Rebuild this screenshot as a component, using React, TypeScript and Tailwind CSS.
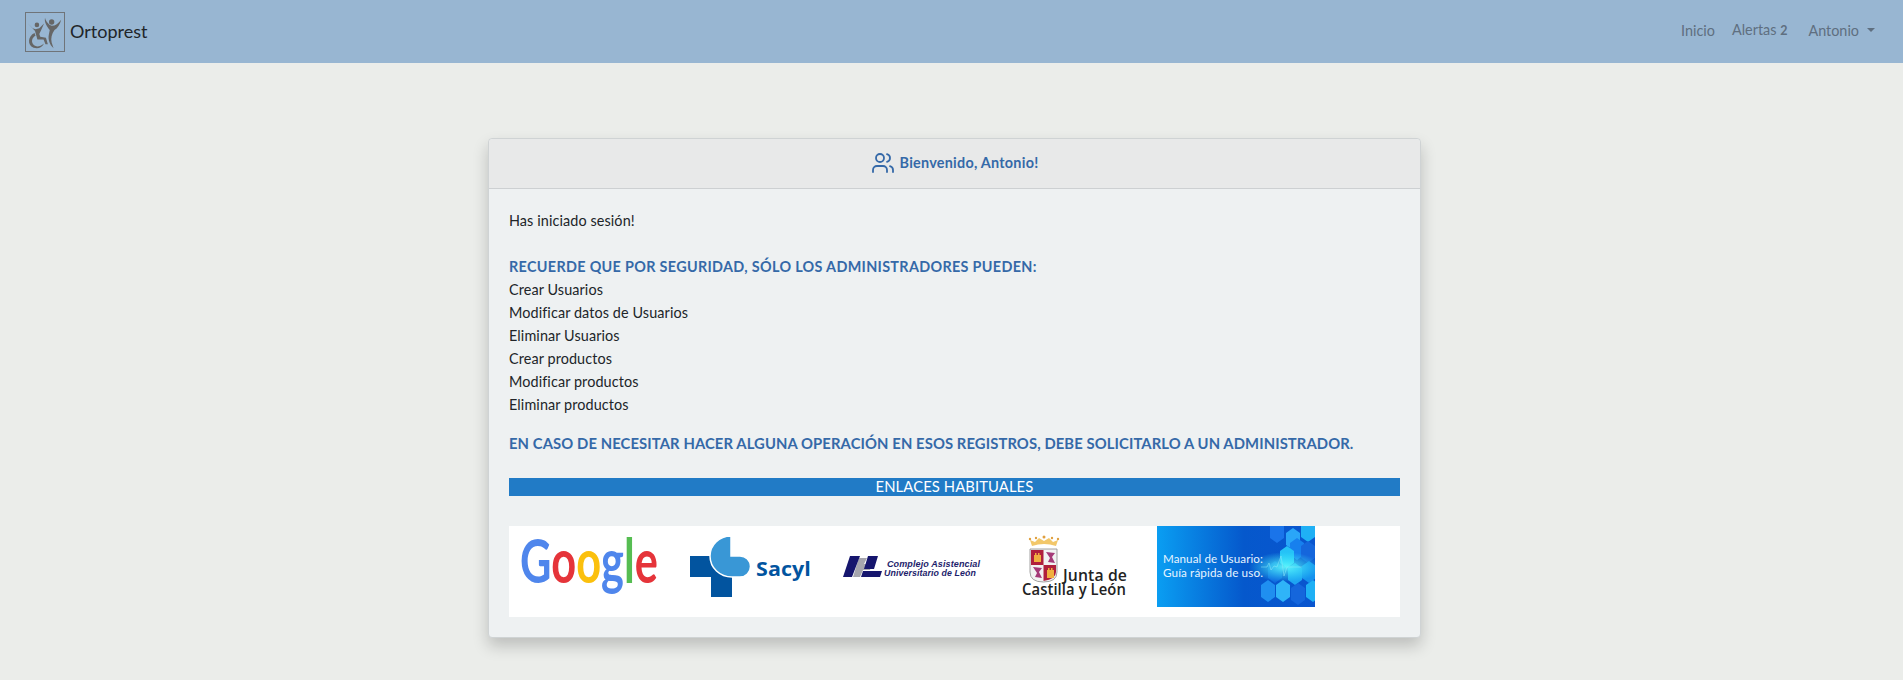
import { Users } from 'lucide-react'

const permisos = [
  'Crear Usuarios',
  'Modificar datos de Usuarios',
  'Eliminar Usuarios',
  'Crear productos',
  'Modificar productos',
  'Eliminar productos',
]

function BrandLogo() {
  return (
    <svg width="40" height="40" viewBox="0 0 40 40" className="block border border-[#6f7479] box-border">
      <g fill="#666666" stroke="none">
        <circle cx="11.5" cy="12.5" r="2.4" />
        <circle cx="27" cy="9.5" r="2.8" />
        <path d="M2 11 L7 16 L10 17 L14 16 L19 11 L16 18 L14 22 L15 25 L21 26 L23 33 L20.5 33 L18.5 28 L12 28 L9.5 19 Z" />
        <path d="M9 21 C2 24 1 34 8 36.5 C13 38 17 36 19 32 C15 35.5 11 36 8.5 34 C5 31 6 26 10 24 Z" />
        <path d="M20 5 C21 9 24 12.5 27 13.5 C31 13.5 34 11 37 7 C36 12 33 16 30 18 C27 22 26 27 27 31 L29 37 C25 34 23 28 24 23 L25 18 C22 14 19 10 20 5 Z" />
      </g>
    </svg>
  )
}

function GoogleLogo() {
  return (
    <svg width="162" height="81" className="block">
      <text x="11" y="57" fontFamily="Lato, sans-serif" fontWeight="700" fontSize="61" textLength="138" lengthAdjust="spacingAndGlyphs">
        <tspan fill="#4f86ec">G</tspan>
        <tspan fill="#e5343a">o</tspan>
        <tspan fill="#fbc00d">o</tspan>
        <tspan fill="#4f86ec">g</tspan>
        <tspan fill="#56bd52">l</tspan>
        <tspan fill="#e5343a">e</tspan>
      </text>
    </svg>
  )
}

function SacylLogo() {
  return (
    <svg width="162" height="81" className="block">
      <path d="M19 30 H61 V71 H40 V51 H19 Z" fill="#02549f" />
      <path d="M60 10 V30 H69 A10.5 10.5 0 0 1 69 51 H61 C49 51 39 42 39 30 C39 19 48 10 60 10 Z" fill="#3997d6" stroke="#ffffff" strokeWidth="1.5" />
      <text x="85" y="50" fontFamily="'Open Sans', sans-serif" fontWeight="700" fontSize="20" fill="#02549f" textLength="55" lengthAdjust="spacingAndGlyphs">Sacyl</text>
    </svg>
  )
}

function ComplejoLogo() {
  return (
    <svg width="162" height="81" className="block">
      <path d="M26 32 H34 L31 38 H39 L37 44 H30 L27 51 H20 L24 38 Z" fill="#a6a6ae" />
      <path d="M17 30 H27 L19 51 H10 Z M35 30 H45 L41 43 H31 Z M30 45 H49 L47 51 H28 Z" fill="#16166e" />
      <text fontFamily="'Liberation Sans', sans-serif" fontWeight="700" fontStyle="italic" fontSize="9.5" fill="#1d1d6b">
        <tspan x="54" y="41" textLength="93" lengthAdjust="spacingAndGlyphs">Complejo Asistencial</tspan>
        <tspan x="51" y="50" textLength="92" lengthAdjust="spacingAndGlyphs">Universitario de León</tspan>
      </text>
    </svg>
  )
}

function JuntaLogo() {
  return (
    <svg width="162" height="81" className="block">
      <path d="M37 20 L35 14 L40 16 L44 12 L49 15 L54 12 L58 16 L63 14 L61 20 Q49 16 37 20 Z" fill="#f2c76a" />
      <g fill="#e0a040">
        <circle cx="35" cy="13" r="1.2" />
        <circle cx="41" cy="12" r="1.2" />
        <circle cx="49" cy="11" r="1.5" />
        <circle cx="57" cy="12" r="1.2" />
        <circle cx="63" cy="13" r="1.2" />
      </g>
      <path d="M35 23 H62 V46 Q62 56 48.5 56 Q35 56 35 46 Z" fill="#f2f2f2" stroke="#8a8a8a" strokeWidth="0.8" />
      <rect x="36" y="24" width="12.5" height="15" fill="#b0203c" />
      <path d="M48.5 39 H61 V46 Q61 53 48.5 55 Z" fill="#b0203c" />
      <path d="M39 36 V29 H40 V27 H41.5 V29 H43 V27 H44.5 V29 H46 V36 Z M52 52 V44 H53 V42 H54.5 V44 H56 V42 H57.5 V44 H59 V52 Z" fill="#f0b040" />
      <path d="M51 26 L60 27 L57 31 L60 37 L53 36 L55 32 Z M38 41 L47 42 L44 46 L47 52 L40 51 L42 47 Z" fill="#a53a78" />
      <text fontFamily="'Open Sans', sans-serif" fontWeight="600" fontSize="15.5" fill="#222222">
        <tspan x="68" y="55" textLength="64" lengthAdjust="spacingAndGlyphs">Junta de</tspan>
        <tspan x="27" y="69" textLength="104" lengthAdjust="spacingAndGlyphs">Castilla y León</tspan>
      </text>
    </svg>
  )
}

const hexagons = [
  [120, 6, '#1a74ea'], [136, 13, '#2aa6f8'], [151, 5, '#1fb0f5'], [140, 23, '#1780ee'], [151, 26, '#1566dc'],
  [130, 31, '#25c2f7'], [138, 48, '#1ea4f2'], [152, 46, '#1592ee'], [111, 65, '#1f8ff0'], [126, 65, '#2fb4f8'],
  [141, 68, '#1566dc'], [156, 65, '#1fb0f5'], [118, 46, '#0f6ce0'],
] as const

function ManualBanner() {
  return (
    <svg width="158" height="81" className="block">
      <defs>
        <linearGradient id="fondo" x1="0" y1="0" x2="1" y2="0">
          <stop offset="0" stopColor="#0a9ef2" />
          <stop offset="0.55" stopColor="#0558cc" />
          <stop offset="1" stopColor="#0a55cf" />
        </linearGradient>
        <radialGradient id="brillo">
          <stop offset="0" stopColor="#5ff6fb" stopOpacity="0.95" />
          <stop offset="1" stopColor="#38f0fa" stopOpacity="0" />
        </radialGradient>
      </defs>
      <rect width="158" height="81" fill="url(#fondo)" />
      {hexagons.map(([x, y, color]) => (
        <polygon
          key={`${x}-${y}`}
          points={`${x},${y - 11} ${x + 7},${y - 6} ${x + 7},${y + 6} ${x},${y + 11} ${x - 7},${y + 6} ${x - 7},${y - 6}`}
          fill={color}
        />
      ))}
      <ellipse cx="128" cy="41" rx="36" ry="15" fill="url(#brillo)" />
      <polyline points="104,41 110,41 112,37 114,44 117,40 120,41 124,30 127,50 130,41 145,41" fill="none" stroke="#8fe8fb" strokeWidth="0.5" />
      <text fontFamily="Lato, sans-serif" fontSize="12" fill="#e6f4ff">
        <tspan x="6" y="37" textLength="100" lengthAdjust="spacingAndGlyphs">Manual de Usuario:</tspan>
        <tspan x="6" y="51" textLength="100" lengthAdjust="spacingAndGlyphs">Guía rápida de uso.</tspan>
      </text>
    </svg>
  )
}

export default function App() {
  return (
    <div className="min-h-[680px] bg-[#ebedea] font-['Lato',sans-serif] text-[14.4px] leading-[23px] text-[#212529]">
      <nav className="h-[63px] bg-[#98b6d2] flex items-center justify-between pl-[25px] pr-[28px]">
        <div className="flex items-center gap-[5px]">
          <BrandLogo />
          <span className="text-[18px] leading-[28px] mb-[2px]">Ortoprest</span>
        </div>
        <div className="flex items-center mb-[3px] text-[#5f6f80]">
          <span>Inicio</span>
          <span className="ml-[17px]">Alertas <b className="text-[12.5px]">2</b></span>
          <span className="ml-[21px]">Antonio</span>
          <span className="ml-[8px] w-0 h-0 border-x-[4px] border-x-transparent border-t-[4px] border-t-[#5f6f80]" />
        </div>
      </nav>

      <main className="pt-[75px] pl-[6px] flex justify-center">
        <div className="w-[933px] h-[500px] border border-[#cfd3d4] rounded-[4px] bg-[#eef1f2] shadow-[0_8px_16px_rgba(0,0,0,0.2)]">
          <div className="h-[50px] pb-[2px] bg-[#e8e9e9] border-b border-[#cdd0d2] flex items-center justify-center gap-[5px] rounded-t-[4px] font-bold tracking-[0.25px] text-[#3569a8]">
            <Users className="w-[24px] h-[24px]" strokeWidth={1.8} />
            <span>Bienvenido, Antonio!</span>
          </div>
          <div className="px-[20px] pt-[20px] tracking-[0.1px]">
            <p className="h-[46px]">Has iniciado sesión!</p>
            <p className="font-bold tracking-[0.32px] text-[#3569a8]">RECUERDE QUE POR SEGURIDAD, SÓLO LOS ADMINISTRADORES PUEDEN:</p>
            {permisos.map((permiso) => (
              <p key={permiso}>{permiso}</p>
            ))}
            <p className="mt-[15px] text-[14.8px] leading-[24px] font-bold text-[#3569a8] whitespace-nowrap">
              EN CASO DE NECESITAR HACER ALGUNA OPERACIÓN EN ESOS REGISTROS, DEBE SOLICITARLO A UN ADMINISTRADOR.
            </p>
            <div className="mt-[23px] h-[18px] bg-[#217bc6] text-center text-white text-[14.8px] leading-[17px]">ENLACES HABITUALES</div>
            <div className="mt-[30px] h-[91px] bg-white flex items-start">
              <GoogleLogo />
              <SacylLogo />
              <ComplejoLogo />
              <JuntaLogo />
              <ManualBanner />
            </div>
          </div>
        </div>
      </main>
    </div>
  )
}
